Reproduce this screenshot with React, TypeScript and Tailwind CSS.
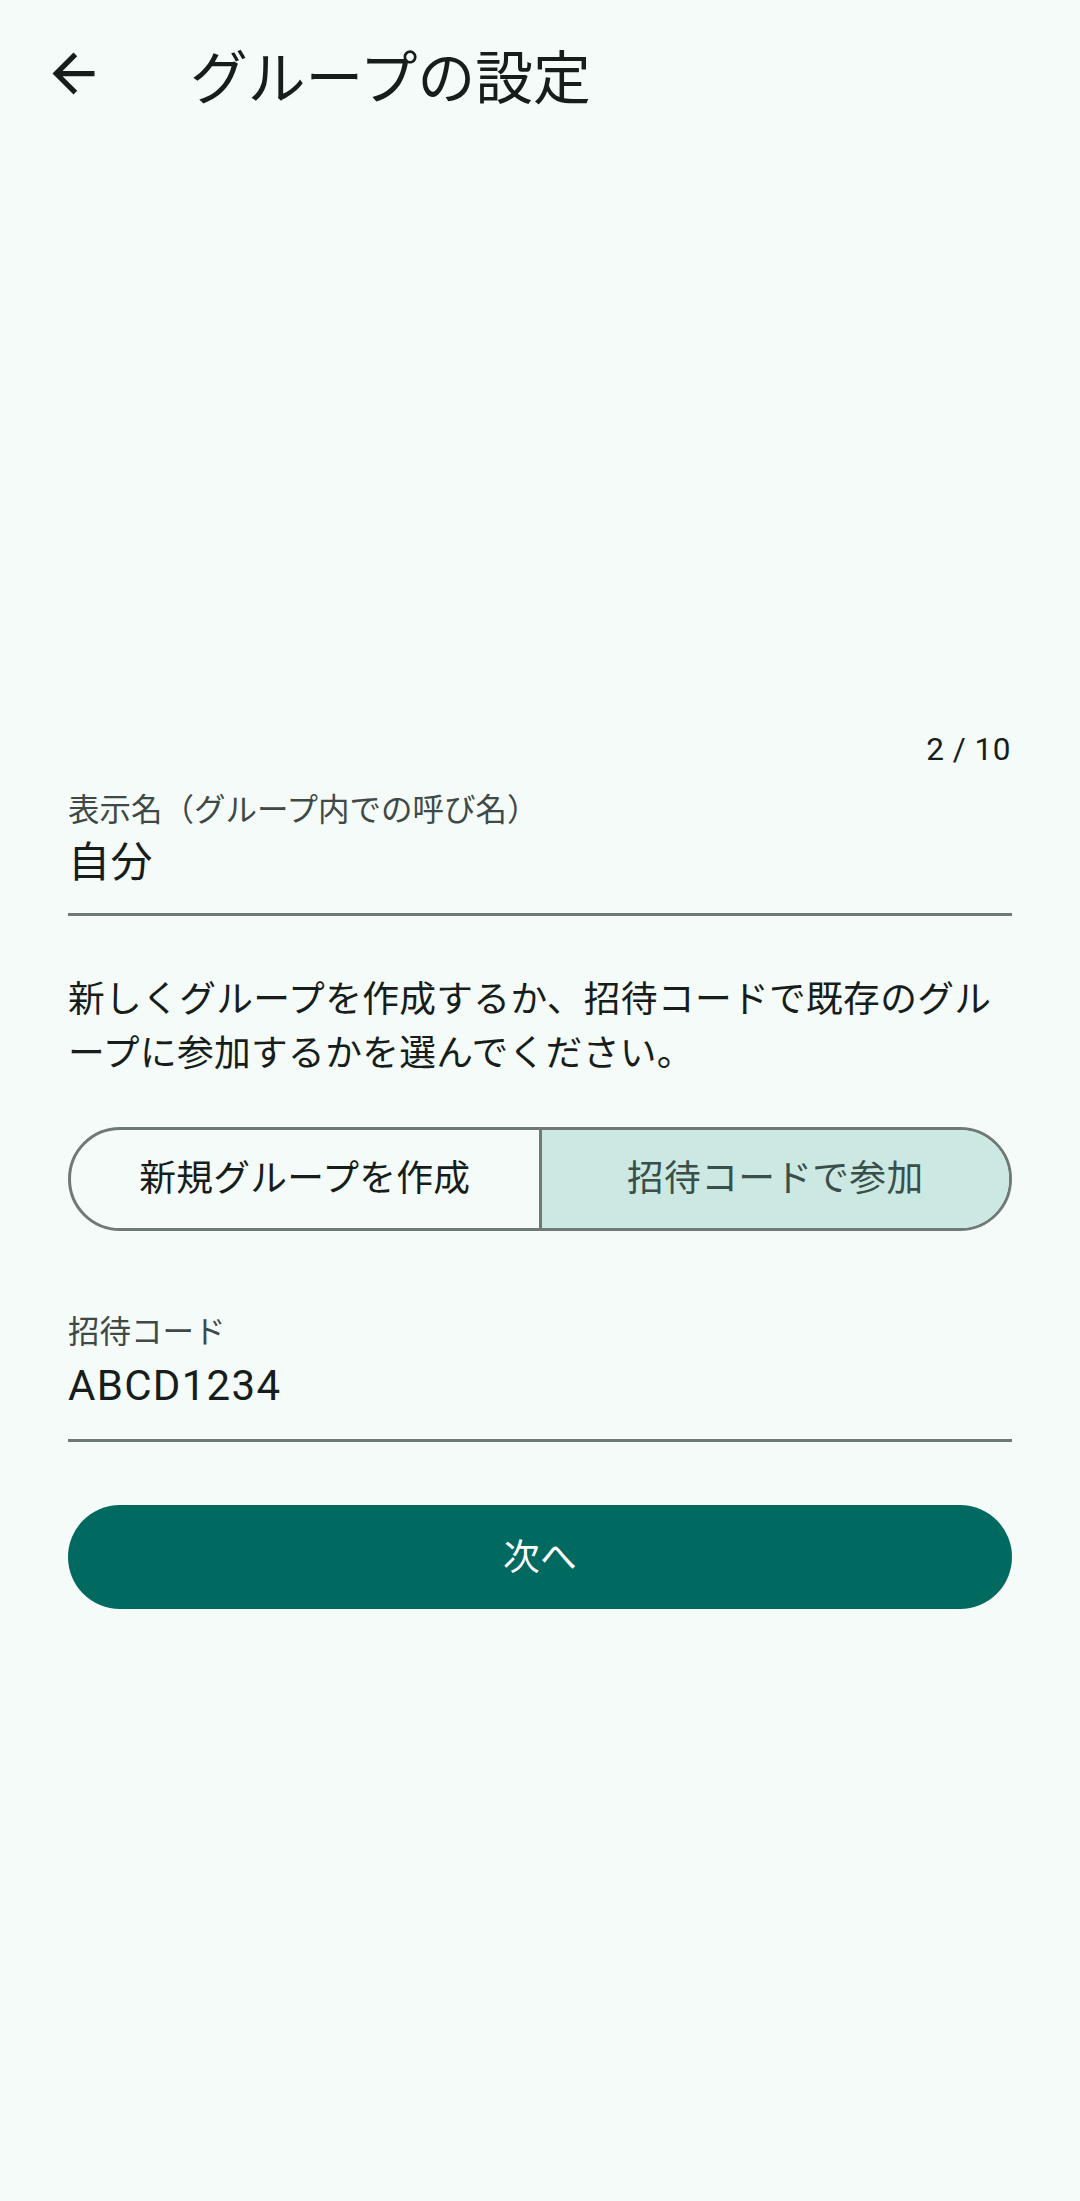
import React from "react";

const FONT = { fontFamily: 'Roboto, "Noto Sans CJK JP", sans-serif' };

export default function App() {
  return (
    <div className="min-h-[2201px] w-[1080px] bg-[#f4fbf8] text-[#171d1b]" style={FONT}>
      {/* Top app bar */}
      <div className="flex h-[147px] items-center">
        <div className="ml-[42px] flex h-[63px] w-[63px] items-center justify-center">
          <svg viewBox="0 0 24 24" className="h-[63px] w-[63px]" fill="#171d1b">
            <path d="M20 11H7.83l5.59-5.59L12 4l-8 8 8 8 1.41-1.41L7.83 13H20v-2z" />
          </svg>
        </div>
        <div className="ml-[85px] mt-[10px] text-[57.75px] leading-[58px]">グループの設定</div>
      </div>

      <div className="px-[68px]">
        {/* counter */}
        <div className="mt-[587px] flex justify-end pr-[1px] text-[31.5px] leading-[31.5px] tracking-[0.5px] font-normal">
          2 / 10
        </div>

        {/* field 1 */}
        <div className="mt-[29px] text-[31.5px] leading-[31.5px] text-[#3f4946]">表示名（グループ内での呼び名）</div>
        <div className="mt-[16px] text-[42px] leading-[42px] tracking-[0.5px]">自分</div>
        <div className="mt-[29px] h-[3px] bg-[#6f7975]" />

        {/* paragraph */}
        <p className="mt-[57px] text-[36.75px] leading-[54px] tracking-[0.3px]">
          新しくグループを作成するか、招待コードで既存のグループに参加するかを選んでください。
        </p>

        {/* segmented */}
        <div className="mt-[46px] flex h-[104px] overflow-hidden rounded-full border-[3px] border-[#6f7975]">
          <div className="flex flex-1 items-center justify-center text-[36.75px] tracking-[0.3px] text-[#171d1b]">
            新規グループを作成
          </div>
          <div className="w-[3px] bg-[#6f7975]" />
          <div className="flex flex-1 items-center justify-center bg-[#cce8e2] text-[36.75px] tracking-[0.3px] text-[#3a4f4a]">
            招待コードで参加
          </div>
        </div>

        {/* field 2 */}
        <div className="mt-[86px] text-[31.5px] leading-[31.5px] text-[#3f4946]">招待コード</div>
        <div className="mt-[16px] text-[42px] leading-[42px] tracking-[1.3px]">ABCD1234</div>
        <div className="mt-[32px] h-[3px] bg-[#6f7975]" />

        {/* button */}
        <div className="mt-[63px] flex h-[104px] items-center justify-center rounded-full bg-[#006a60] pt-[2px] text-[36.75px] tracking-[0.3px] text-white">
          次へ
        </div>
      </div>
    </div>
  );
}
